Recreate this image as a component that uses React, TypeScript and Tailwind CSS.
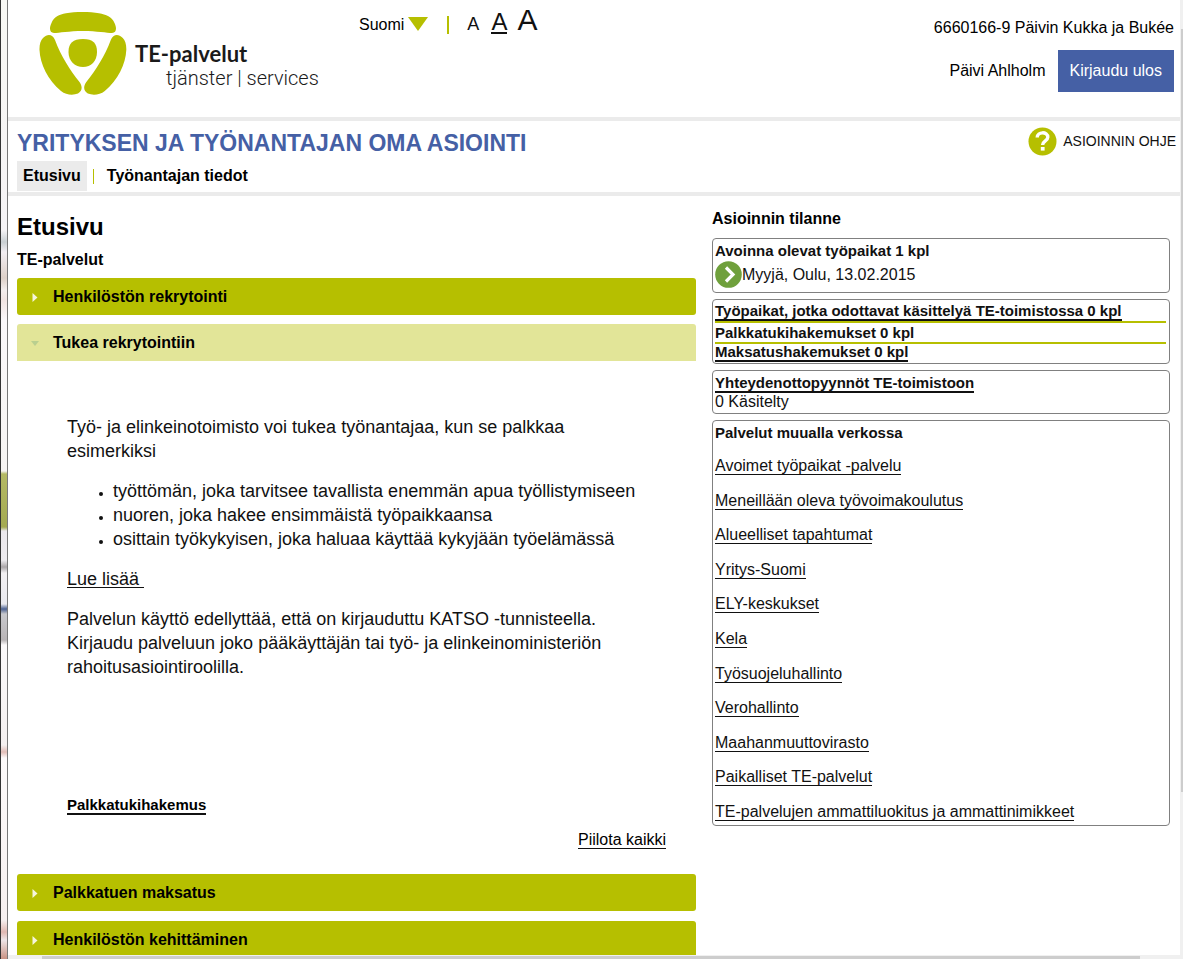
import React from "react";

const webLinks = [
  "Avoimet työpaikat -palvelu",
  "Meneillään oleva työvoimakoulutus",
  "Alueelliset tapahtumat",
  "Yritys-Suomi",
  "ELY-keskukset",
  "Kela",
  "Työsuojeluhallinto",
  "Verohallinto",
  "Maahanmuuttovirasto",
  "Paikalliset TE-palvelut",
  "TE-palvelujen ammattiluokitus ja ammattinimikkeet",
];

function LogoMark() {
  return (
    <svg width="88" height="83" viewBox="0 0 88 83" fill="#b6bf00" aria-hidden="true">
      <path d="M15 21C10.500 21 10 16 12.500 11C15 5 20 2.500 27 1.300C36 -.400 51 -.400 60 1.300C67 2.500 73 5 75.500 11C78 16 77.500 21 73 21C68 21 58 19 44 19C30 19 20 21 15 21Z" />
      <path d="M4 26C8.500 21.500 13.500 22 16 28C22 44 31 58 40.500 70C44 75 43 79.500 39 81.500C34 83.500 27 83 22 79C9 68 1 52 0.500 38C0.300 33 1.500 28.500 4 26Z" />
      <path d="M83.800 26C79.300 21.500 74.300 22 71.800 28C65.800 44 56.800 58 47.300 70C43.800 75 44.800 79.500 48.800 81.500C53.800 83.500 60.800 83 65.800 79C78.800 68 86.800 52 87.300 38C87.500 33 86.300 28.500 83.800 26Z" />
      <path d="M44 27C54 27 58 31 58 40C58 49 52 55 44 55C36 55 29.500 49 29.500 40C29.500 31 34 27 44 27Z" />
    </svg>
  );
}

function AccordionHeader({ title, open = false }: { title: string; open?: boolean }) {
  return (
    <button
      type="button"
      aria-expanded={open}
      className={
        open
          ? "flex h-[37px] w-full items-center rounded-t-[3px] bg-[#e2e598] pl-3.5 text-left text-base font-bold"
          : "flex h-[37px] w-full items-center rounded-[3px] bg-[#b6bf00] pl-3.5 text-left text-base font-bold"
      }
    >
      <svg className="mr-3.5 shrink-0" width="8" height="10" viewBox="0 0 8 10" aria-hidden="true">
        {open ? <path d="M0 3H8L4 8Z" fill="#b9cf8f" /> : <path d="M1.500 1L6.500 5.500L1.500 10Z" fill="#f6f5dc" />}
      </svg>
      {title}
    </button>
  );
}

function Box({ children }: { children: React.ReactNode }) {
  return <section className="rounded-[4px] border border-[#808080] px-0.5">{children}</section>;
}

const boldLink = "border-b-2 border-[#111] leading-4";
const thinLink = "border-b border-[#111] leading-4";

export default function App() {
  return (
    <div className="flex h-screen overflow-hidden bg-white font-['Liberation_Sans',Arial,sans-serif] text-base leading-5 text-black">
      <div
        aria-hidden="true"
        className="w-2 shrink-0 border-r border-l border-r-[#777] border-l-[#333] bg-[linear-gradient(to_bottom,#f8f8f4_0,#f5f3f5_230px,#c9cfd2_242px,#f2eef2_252px,#ddd0c8_278px,#f3eeee_290px,#f0e4e2_300px,#faf8fa_320px,#f6f4f2_471px,#b4b964_474px,#a4aa52_527px,#ebe8ec_531px,#eeecef_560px,#aaa6a8_567px,#f2f0f2_573px,#e9e9ee_604px,#4c6190_609px,#c8c8cc_614px,#b8b4b6_640px,#fbf9fa_645px,#f4f0f0_745px,#e2bdb7_752px,#fdfafa_758px,#f6f0f0_920px,#e0b8b2_932px,#eee6e8_940px,#c99283_959px)]"
      />
      <div className="flex min-w-0 flex-1 flex-col">
        <div className="min-h-0 flex-1 overflow-hidden">
          <header className="flex h-[121px] items-start border-b-4 border-[#ebebeb] pr-1.5 pl-[31px]">
            <a href="#etusivu" className="flex w-[320px] shrink-0 pt-3 text-[#1a1a1a]">
              <LogoMark />
              <span className="flex flex-col pt-[30px] pl-2 leading-6">
                <span className="font-['Lato',sans-serif] text-[22px] font-bold">TE-palvelut</span>
                <span className="pl-[31px] font-['Roboto',sans-serif] text-xl leading-6 font-light whitespace-nowrap">tjänster | services</span>
              </span>
            </a>
            <div className="flex items-baseline pt-2">
              <button type="button" className="flex items-center gap-1">
                Suomi
                <svg className="mb-0.5" width="20" height="14" viewBox="0 0 20 14" aria-hidden="true">
                  <path d="M0 0H20L10 14Z" fill="#b6bf00" />
                </svg>
              </button>
              <span aria-hidden="true" className="mr-[18px] mb-0.5 ml-[19px] h-[18px] w-0.5 self-end bg-[#b6bf00]" />
              <button type="button" className="text-lg leading-6 text-[#111]">A</button>
              <button type="button" className="ml-3 border-b-2 border-[#111] text-2xl leading-5 text-[#111]">A</button>
              <button type="button" className="ml-2.5 text-3xl leading-6 text-[#111]">A</button>
            </div>
            <div className="ml-auto flex flex-col items-end gap-3 pt-[18px]">
              <span>6660166-9 Päivin Kukka ja Bukée</span>
              <div className="flex items-center gap-3">
                <span>Päivi Ahlholm</span>
                <button type="button" className="h-[42px] bg-[#4560a5] px-3 text-white">Kirjaudu ulos</button>
              </div>
            </div>
          </header>

          <div className="border-b-4 border-[#ebebeb] pr-1 pb-px pl-[9px]">
            <div className="flex h-10 items-center justify-between">
              <h2 className="pt-1 text-[23px] font-bold text-[#4560a5]">YRITYKSEN JA TYÖNANTAJAN OMA ASIOINTI</h2>
              <a href="#ohje" className="flex items-center gap-1.5 text-sm text-[#111]">
                <svg width="29" height="29" viewBox="0 0 29 29" aria-hidden="true">
                  <circle cx="14.500" cy="14.500" r="14" fill="#b6bf00" />
                  <path d="M9.200 10.500C9.200 4.300 19.800 4.300 19.800 10.300C19.800 14 14.600 13.800 14.600 18" fill="none" stroke="#fff" strokeWidth="3.400" />
                  <rect x="12.800" y="20" width="3.800" height="3.600" fill="#fff" />
                </svg>
                ASIOINNIN OHJE
              </a>
            </div>
            <nav className="flex h-[30px] items-center font-bold">
              <a href="#etusivu" className="flex h-full items-center bg-[#ebebeb] px-1.5">Etusivu</a>
              <span aria-hidden="true" className="mr-[13px] ml-1.5 h-[15px] w-px bg-[#b6bf00]" />
              <a href="#tiedot">Työnantajan tiedot</a>
            </nav>
          </div>

          <div className="grid grid-cols-[679fr_458fr] gap-4 pr-2.5 pl-[9px]">
            <main>
              <h1 className="pt-[17px] text-2xl leading-7 font-bold">Etusivu</h1>
              <h3 className="pt-[9px] pb-2 leading-5 font-bold">TE-palvelut</h3>
              <AccordionHeader title="Henkilöstön rekrytointi" />
              <div className="h-[9px]" />
              <AccordionHeader title="Tukea rekrytointiin" open />
              <div className="px-[50px] pt-[54px] text-lg leading-6 text-[#111]">
                <p>Työ- ja elinkeinotoimisto voi tukea työnantajaa, kun se palkkaa esimerkiksi</p>
                <ul className="list-disc pt-4 pl-[46px] marker:text-xs">
                  <li>työttömän, joka tarvitsee tavallista enemmän apua työllistymiseen</li>
                  <li>nuoren, joka hakee ensimmäistä työpaikkaansa</li>
                  <li>osittain työkykyisen, joka haluaa käyttää kykyjään työelämässä</li>
                </ul>
                <p className="mt-4 flex h-6 items-center">
                  <a href="#lue" className={thinLink}>Lue lisää&nbsp;</a>
                </p>
                <p className="pt-4">
                  Palvelun käyttö edellyttää, että on kirjauduttu KATSO -tunnisteella. Kirjaudu palveluun joko pääkäyttäjän tai työ- ja elinkeinoministeriön rahoitusasiointiroolilla.
                </p>
              </div>
              <div className="flex px-[50px] pt-[118px] text-[15px]">
                <a href="#palkkatuki" className={`${boldLink} font-bold`}>Palkkatukihakemus</a>
              </div>
              <div className="flex justify-end pt-[17px] pr-[30px] pb-[25px]">
                <a href="#piilota" className={thinLink}>Piilota kaikki</a>
              </div>
              <AccordionHeader title="Palkkatuen maksatus" />
              <div className="h-2.5" />
              <AccordionHeader title="Henkilöstön kehittäminen" />
            </main>

            <aside className="text-[#111]">
              <h3 className="pt-[13px] pb-[9px] font-bold text-black">Asioinnin tilanne</h3>
              <div className="flex flex-col gap-1.5">
                <Box>
                  <h4 className="pt-0.5 text-[15px] font-bold">Avoinna olevat työpaikat 1 kpl</h4>
                  <a href="#myyja" className="flex items-center pb-1">
                    <svg width="27" height="27" viewBox="0 0 27 27" aria-hidden="true">
                      <circle cx="13.500" cy="13.500" r="13.300" fill="#6fa03c" />
                      <path d="M11 6.500L18 13.500L11 20.500" fill="none" stroke="#fff" strokeWidth="3.200" />
                    </svg>
                    Myyjä, Oulu, 13.02.2015
                  </a>
                </Box>
                <Box>
                  <ul className="pt-[3px] pr-px pb-px text-[15px] font-bold">
                    <li className="flex border-b-2 border-[#b6bf00]"><a href="#odottavat" className={boldLink}>Työpaikat, jotka odottavat käsittelyä TE-toimistossa 0 kpl</a></li>
                    <li className="border-b-2 border-[#b6bf00] leading-[19px]">Palkkatukihakemukset 0 kpl</li>
                    <li className="flex"><a href="#maksatus" className={boldLink}>Maksatushakemukset 0 kpl</a></li>
                  </ul>
                </Box>
                <Box>
                  <div className="flex pt-1 text-[15px] font-bold"><a href="#yhteydenotto" className={boldLink}>Yhteydenottopyynnöt TE-toimistoon</a></div>
                  <p className="pb-0.5 leading-[18px]">0 Käsitelty</p>
                </Box>
                <Box>
                  <h4 className="pt-0.5 text-[15px] font-bold">Palvelut muualla verkossa</h4>
                  <ul className="flex min-h-[382px] flex-col justify-between gap-4 pt-[15px] pb-1">
                    {webLinks.map((label) => (
                      <li key={label} className="flex"><a href="#verkossa" className={thinLink}>{label}</a></li>
                    ))}
                  </ul>
                </Box>
              </div>
            </aside>
          </div>
        </div>
        <div aria-hidden="true" className="flex h-1 shrink-0 items-end bg-[#f0f0f0] pr-10 pl-[34px]">
          <div className="h-[3px] flex-1 bg-[#cdcdcd]" />
        </div>
      </div>
      <div aria-hidden="true" className="flex w-[3px] shrink-0 flex-col bg-[#f0f0f0] pt-[29px] pl-px">
        <div className="h-[82%] bg-[#cdcdcd]" />
      </div>
    </div>
  );
}
